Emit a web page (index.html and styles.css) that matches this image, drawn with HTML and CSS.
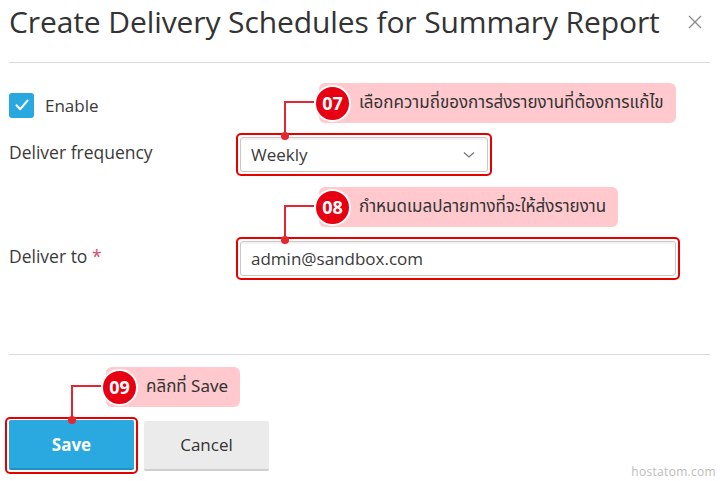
FILE: index.html
```html
<!DOCTYPE html>
<html lang="en">
<head>
    <meta charset="UTF-8">
    <meta name="viewport" content="width=device-width, initial-scale=1.0">
    <title>Create Delivery Schedules</title>
    <link rel="stylesheet" href="styles.css">
</head>
<body>
    <div class="dialog">
        <div class="dialog-header">
            <h1>Create Delivery Schedules for Summary Report</h1>
            <svg class="close" width="14" height="14" viewBox="0 0 14 14"><path d="M1 1 L13 13 M13 1 L1 13" stroke="#8a8a8a" stroke-width="1.3"/></svg>
        </div>

        <form class="dialog-body">
            <div class="row row-enable">
                <label class="check">
                    <span class="checkbox">
                        <svg width="16" height="16" viewBox="0 0 16 16"><path d="M2.5 8.3 L6.3 12.2 L13.5 3.6" fill="none" stroke="#fff" stroke-width="2.1" stroke-linecap="round" stroke-linejoin="round"/></svg>
                    </span>
                    Enable
                </label>
            </div>

            <div class="row row-frequency">
                <label class="field-label">Deliver frequency</label>
                <div class="highlight highlight-select">
                    <div class="callout">
                        <span class="callout-line"></span>
                        <span class="tag"><span class="badge">07</span>เลือกความถี่ของการส่งรายงานที่ต้องการแก้ไข</span>
                    </div>
                    <div class="select">
                        <span>Weekly</span>
                        <svg width="12" height="8" viewBox="0 0 12 8"><path d="M1 1.5 L6 6 L11 1.5" fill="none" stroke="#777" stroke-width="1.3"/></svg>
                    </div>
                </div>
            </div>

            <div class="row row-deliver">
                <label class="field-label">Deliver to <span class="required">*</span></label>
                <div class="highlight highlight-input">
                    <div class="callout">
                        <span class="callout-line"></span>
                        <span class="tag"><span class="badge">08</span>กำหนดเมลปลายทางที่จะให้ส่งรายงาน</span>
                    </div>
                    <div class="input">admin@sandbox.com</div>
                </div>
            </div>
        </form>

        <div class="dialog-footer">
            <div class="highlight highlight-button">
                <div class="callout callout-save">
                    <span class="callout-line"></span>
                    <span class="tag"><span class="badge">09</span>คลิกที่ Save</span>
                </div>
                <button type="button" class="btn btn-primary">Save</button>
            </div>
            <button type="button" class="btn btn-default">Cancel</button>
        </div>

        <div class="watermark">hostatom.com</div>
    </div>
</body>
</html>
```

FILE: styles.css
```css
body { margin: 0; font-family: "Open Sans", "Noto Sans Thai", "Noto Sans", sans-serif; color: #3a3a3a; background: #fff; }
.dialog { position: relative; width: 720px; height: 481px; padding: 0 10px 0 9px; box-sizing: border-box; }

.dialog-header { display: flex; align-items: flex-start; justify-content: space-between; height: 62px; border-bottom: 1px solid #d9d9e2; }
.dialog-header h1 { margin: 0; font-size: 30px; font-weight: 400; line-height: 44px; color: #333; letter-spacing: -0.1px; }
.close { margin-top: 15px; margin-right: 8px; }

.dialog-body { padding-top: 29px; height: 292px; box-sizing: border-box; border-bottom: 1px solid #d9d9e2; }
.row { display: flex; align-items: center; }
.row-enable { height: 26px; }
.row-frequency { margin-top: 15px; }
.row-deliver { margin-top: 61px; }

.check { display: flex; align-items: center; font-size: 17px; }
.checkbox { display: flex; align-items: center; justify-content: center; width: 25px; height: 25px; margin-right: 11px; background: #29a8e0; border-radius: 3px; }

.field-label { width: 227px; font-size: 17.5px; margin-bottom: 5px; }
.required { color: #d84a68; }

.highlight { position: relative; border: 2px solid #e60000; border-radius: 5px; padding: 2px; }
.highlight-select { width: 256px; box-sizing: border-box; }
.highlight-input { width: 444px; box-sizing: border-box; }

.select, .input { height: 35px; box-sizing: border-box; border: 1px solid #c9c9c9; border-radius: 3px; padding: 0 10px; font-size: 17px; display: flex; align-items: center; box-shadow: inset 0 2px 2px rgba(0,0,0,0.06); }
.select { justify-content: space-between; padding-right: 12px; }

.callout { position: absolute; left: 46px; bottom: calc(100% - 1px); display: flex; align-items: flex-start; white-space: nowrap; }
.callout-line { position: relative; width: 28px; height: 33px; margin-top: 18px; border-top: 2px solid #e3262f; border-left: 2px solid #e3262f; }
.callout-line::after { content: ""; position: absolute; left: -5px; bottom: -4px; width: 8px; height: 8px; border-radius: 50%; background: #e3262f; }
.tag { display: flex; align-items: center; height: 40px; margin-left: 5px; padding-right: 12px; background: #ffc9ce; border-radius: 6px; font-family: "Noto Sans Thai", "Open Sans", sans-serif; font-size: 17px; color: #333; }
.badge { display: flex; align-items: center; justify-content: center; width: 33px; height: 33px; margin-left: -5px; margin-right: 8px; border: 2px solid #fff; border-radius: 50%; background: #e60012; color: #fff; font-family: "Open Sans", sans-serif; font-weight: 700; font-size: 18px; }

.dialog-footer { display: flex; align-items: center; padding-top: 62px; }
.highlight-button { margin-left: -4px; margin-right: 6px; padding: 1px 2px 2px; }
.callout-save { left: 64px; }
.btn { width: 125px; height: 50px; border: none; border-radius: 2px; font-family: "Open Sans", sans-serif; font-size: 17px; cursor: pointer; }
.btn-primary { background: #29a9e0; color: #fff; font-weight: 700; border-bottom: 2px solid #2190c2; }
.btn-default { background: #ebebeb; color: #333; border-bottom: 2px solid #cfcfcf; }

.watermark { position: absolute; right: 4px; bottom: 1px; font-size: 12px; color: #bdbdbd; letter-spacing: 0.3px; }
```
